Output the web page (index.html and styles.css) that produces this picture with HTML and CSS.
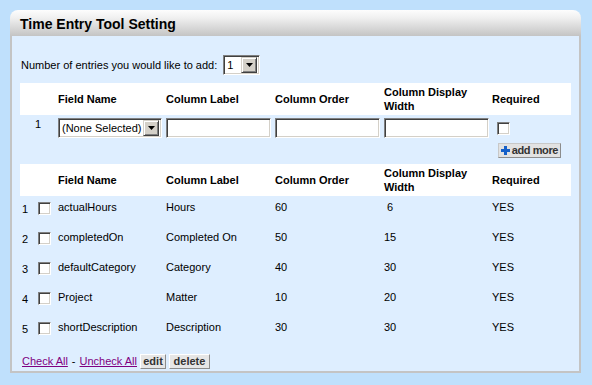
FILE: index.html
```html
<!DOCTYPE html>
<html>
<head>
<meta charset="utf-8">
<link rel="stylesheet" href="styles.css">
</head>
<body>
<div class="panel">
  <div class="panel-head">Time Entry Tool Setting</div>
  <div class="panel-body">
    <div class="count-line">
      <span>Number of entries you would like to add:</span>
      <div class="select select-count"><span class="select-text">1</span><span class="select-btn"><svg width="7" height="4" viewBox="0 0 7 4"><path d="M0 0H7L3.5 4Z" fill="#000"/></svg></span></div>
    </div>

    <table class="grid grid-entry">
      <colgroup><col class="c-num1"><col class="c-field"><col class="c-label"><col class="c-order"><col class="c-width"><col class="c-req"></colgroup>
      <tr class="head-row">
        <th></th><th>Field Name</th><th>Column Label</th><th>Column Order</th><th>Column Display<br>Width</th><th>Required</th>
      </tr>
      <tr class="entry-row">
        <td class="entry-num">1</td>
        <td><div class="select select-field"><span class="select-text">(None Selected)</span><span class="select-btn"><svg width="7" height="4" viewBox="0 0 7 4"><path d="M0 0H7L3.5 4Z" fill="#000"/></svg></span></div></td>
        <td><span class="field"></span></td>
        <td><span class="field"></span></td>
        <td><span class="field"></span></td>
        <td class="req-cell"><span class="check"></span></td>
      </tr>
    </table>

    <div class="add-line">
      <span class="btn btn-add"><svg class="plus" width="9" height="9" viewBox="0 0 9 9"><rect x="3" y="0" width="3" height="9" fill="#1660c8"/><rect x="0" y="3" width="9" height="3" fill="#1660c8"/></svg>add more</span>
    </div>

    <table class="grid grid-data">
      <colgroup><col class="c-num"><col class="c-chk"><col class="c-field"><col class="c-label"><col class="c-order"><col class="c-width"><col class="c-req"></colgroup>
      <tr class="head-row">
        <th></th><th></th><th>Field Name</th><th>Column Label</th><th>Column Order</th><th>Column Display<br>Width</th><th>Required</th>
      </tr>
      <tr class="data-row"><td class="num">1</td><td><span class="check"></span></td><td>actualHours</td><td>Hours</td><td>60</td><td>&nbsp;6</td><td>YES</td></tr>
      <tr class="data-row"><td class="num">2</td><td><span class="check"></span></td><td>completedOn</td><td>Completed On</td><td>50</td><td>15</td><td>YES</td></tr>
      <tr class="data-row"><td class="num">3</td><td><span class="check"></span></td><td>defaultCategory</td><td>Category</td><td>40</td><td>30</td><td>YES</td></tr>
      <tr class="data-row"><td class="num">4</td><td><span class="check"></span></td><td>Project</td><td>Matter</td><td>10</td><td>20</td><td>YES</td></tr>
      <tr class="data-row"><td class="num">5</td><td><span class="check"></span></td><td>shortDescription</td><td>Description</td><td>30</td><td>30</td><td>YES</td></tr>
    </table>

    <div class="footer">
      <a href="#" class="link">Check All</a><span class="sep">-</span><a href="#" class="link">Uncheck All</a>
      <span class="btn btn-edit">edit</span><span class="btn btn-delete">delete</span>
    </div>
  </div>
</div>
</body>
</html>
```
FILE: styles.css
```css
html, body {
  margin: 0;
  padding: 0;
}
body {
  background: #bfe0fc;
  font-family: "Liberation Sans", Arial, sans-serif;
  font-size: 11px;
  color: #000;
  width: 592px;
  height: 385px;
  overflow: hidden;
}
.panel {
  margin: 10px 0 0 10px;
  width: 571px;
}
.panel-head {
  height: 26px;
  box-sizing: border-box;
  padding: 6px 0 0 10px;
  border-radius: 8px 8px 0 0;
  background: linear-gradient(#fdfdfd, #f0f0f0 30%, #c4c4c4);
  font-weight: bold;
  font-size: 14px;
  line-height: 16px;
  color: #000;
}
.panel-body {
  background: #deeeff;
  border: 2px solid #c4c4c4;
  border-top: 0;
  height: 335px;
  box-sizing: content-box;
  padding: 0 8px;
}
.count-line {
  display: flex;
  align-items: center;
  padding-top: 19px;
  padding-left: 1px;
  height: 20px;
}
.count-line > span {
  margin-right: 6px;
}
.select {
  display: flex;
  align-items: center;
  box-sizing: border-box;
  height: 20px;
  background: #fff;
  border: 1px solid;
  border-color: #808080 #fff #fff #808080;
  box-shadow: inset 1px 1px 0 #404040, inset -1px -1px 0 #d4d0c8;
  padding: 2px;
}
.select-count {
  width: 37px;
}
.select-field {
  width: 104px;
}
.select-text {
  flex: 1;
  padding-left: 1px;
  white-space: nowrap;
  overflow: hidden;
  font-size: 11px;
  line-height: 14px;
}
.select-btn {
  display: flex;
  align-items: center;
  justify-content: center;
  box-sizing: border-box;
  width: 16px;
  height: 16px;
  background: #d4d0c8;
  border: 1px solid;
  border-color: #d4d0c8 #404040 #404040 #d4d0c8;
  box-shadow: inset 1px 1px 0 #fff, inset -1px -1px 0 #808080;
}
.grid {
  table-layout: fixed;
  border-collapse: collapse;
  border-spacing: 0;
  width: 551px;
}
.grid-entry {
  margin-top: 8px;
}
.c-num1 { width: 38px; }
.c-num { width: 16px; }
.c-chk { width: 22px; }
.c-field { width: 108px; }
.c-label { width: 109px; }
.c-order { width: 109px; }
.c-width { width: 108px; }
.c-req { width: 79px; }
.grid th, .grid td {
  padding: 0;
  text-align: left;
  white-space: nowrap;
}
.head-row th {
  background: #fff;
  height: 32px;
  vertical-align: middle;
  font-weight: bold;
  font-size: 11px;
  line-height: 14px;
}
.entry-row td {
  vertical-align: top;
  height: 25px;
  padding-top: 3px;
  box-sizing: border-box;
}
.entry-row td.entry-num {
  padding-left: 15px;
  padding-top: 3px;
  line-height: 12px;
}
.entry-row td.req-cell {
  padding-left: 5px;
  padding-top: 7px;
}
.field {
  display: block;
  box-sizing: border-box;
  width: 105px;
  height: 20px;
  background: #fff;
  border: 1px solid;
  border-color: #808080 #fff #fff #808080;
  box-shadow: inset 1px 1px 0 #404040, inset -1px -1px 0 #d4d0c8;
}
.check {
  display: block;
  box-sizing: border-box;
  width: 13px;
  height: 13px;
  background: #fff;
  border: 1px solid;
  border-color: #808080 #fff #fff #808080;
  box-shadow: inset 1px 1px 0 #404040, inset -1px -1px 0 #d4d0c8;
}
.add-line {
  display: flex;
  justify-content: flex-end;
  padding: 3px 10px 0 0;
  height: 24px;
  box-sizing: border-box;
}
.btn {
  display: inline-flex;
  align-items: center;
  box-sizing: border-box;
  height: 15px;
  padding: 0 3px;
  background: #e6e6e6;
  border: 1px solid;
  border-color: #fff #8c8c8c #8c8c8c #fff;
  font-weight: bold;
  font-size: 11px;
  color: #333;
  line-height: 13px;
  white-space: nowrap;
}
.btn-add {
  padding: 0 2px 0 2px;
  letter-spacing: -0.4px;
  background: #e2e2e2;
  border-color: #c8c8c8 #8c8c8c #8c8c8c #c8c8c8;
}
.plus {
  margin-right: 2px;
}
.data-row td {
  height: 30px;
  vertical-align: top;
  padding-top: 5px;
  line-height: 13px;
  box-sizing: border-box;
}
.data-row td.num {
  padding-left: 2px;
  padding-top: 7px;
}
.data-row td .check {
  margin-left: 2px;
  margin-top: 1px;
}
.footer {
  display: flex;
  align-items: center;
  padding: 5px 0 0 2px;
  height: 20px;
}
.link {
  color: #800080;
  text-decoration: underline;
}
.sep {
  margin: 0 4px;
}
.btn-edit {
  margin-left: 3px;
  width: 26px;
  justify-content: center;
}
.btn-delete {
  margin-left: 3px;
  width: 41px;
  justify-content: center;
}
```
